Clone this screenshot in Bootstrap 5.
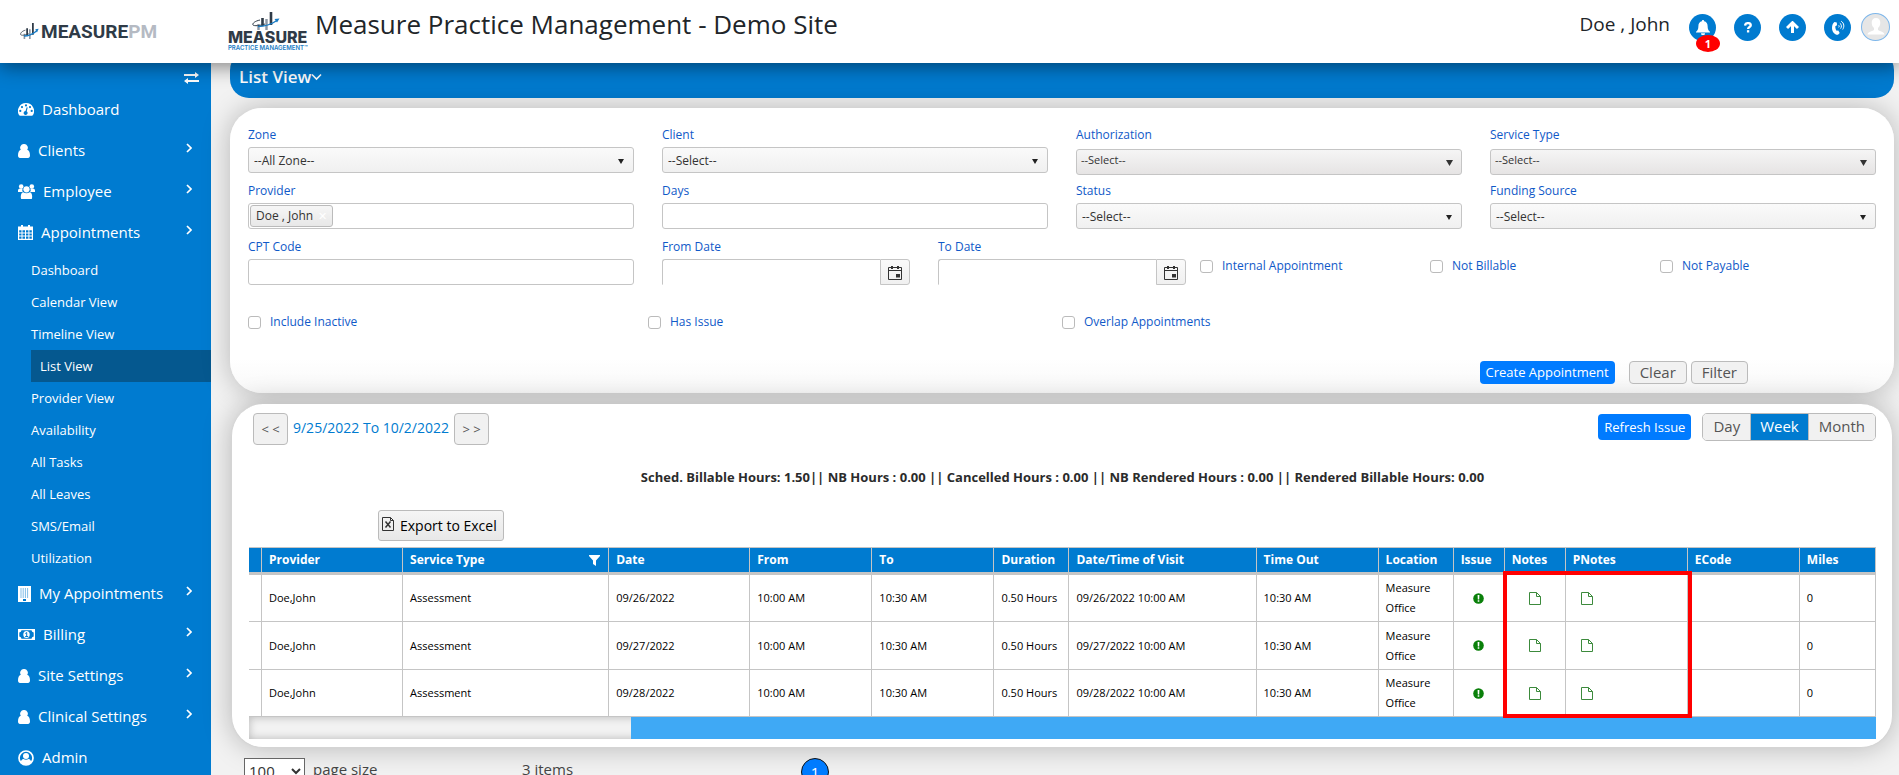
<!DOCTYPE html>
<html lang="en">
<head>
<meta charset="utf-8">
<meta name="viewport" content="width=device-width, initial-scale=1">
<title>Measure Practice Management - List View</title>
<link href="https://cdn.jsdelivr.net/npm/bootstrap@5.3.0/dist/css/bootstrap.min.css" rel="stylesheet">
<style>
:root { --brand: #007bd0; --line: #c5c5c5; --label: #1059c8; }
body { font-family: "Open Sans", "Noto Sans", sans-serif; font-size: 15px; background: #f2f2f2; height: 100vh; overflow: hidden; color: #212529; }
svg { display: block; }
a { text-decoration: none; }

/* top bar */
.topbar { height: 63px; background: #fff; z-index: 20; box-shadow: 0 4px 18px rgba(0,0,0,.45); padding-right: 9px; }
.brand-side { width: 228px; padding: 0 0 0 20px; color: #2f3b47; }
.brand-word { font: 700 19px/20px Roboto, sans-serif; margin-left: 2px; }
.brand-word i { font-style: normal; color: #b5bac3; }
.brand-main { width: 87px; }
.brand-main b { font: 800 16px/13px Inter, sans-serif; color: #2f3b47; }
.brand-main small { font: 600 6px/8px Inter, sans-serif; color: #1a7cc4; white-space: nowrap; }
.site-name { font-size: 26px; line-height: 30px; margin-top: -15px; }
.user-name { font-size: 19px; line-height: 24px; margin: -15px 19px 0 0; }
.round { width: 27px; height: 27px; border-radius: 50%; background: var(--brand); color: #fff; }
.top-icons { gap: 18px; margin-top: -9px; }
.count { top: 21px; left: 7px; width: 24px; height: 17px; border-radius: 50%; background: red; font: 700 11px/17px "Open Sans", sans-serif; }
.avatar { width: 29px; height: 28px; border-radius: 50%; background: #e6e6e6; border: 1px solid #7db6ea; margin-left: -8px; color: #fff; }

/* side menu */
.side { width: 211px; background: var(--brand); padding-top: 27px; }
.side a { color: #fff; }
.toggle { height: 0; padding-right: 12px; }
.toggle button { height: 12px; margin-top: -18px; color: #fff; }
.menu-top { height: 41px; padding: 0 18px 2px; }
.menu-top span { margin-left: 8px; }
.menu-top .arrow { margin: 0 1px 6px auto; }
.menu-sub { height: 32px; margin-left: 31px; padding-top: 1px; font-size: 13px; }
.menu-sub.active { background: #05588f; padding-left: 9px; }

/* panels */
.content-area { padding: 0 5px 0 19px; }
.page-bar { height: 47px; margin-top: -12px; border-radius: 19px; background: var(--brand); color: #fff; font-size: 17px; font-weight: 600; padding: 4px 9px 0; }
.panel { background: #fff; border-radius: 32px; box-shadow: 0 0 28px rgba(0,0,0,.25); }
.panel-filter { margin-top: 10px; height: 285px; padding: 16px 18px 0; background: linear-gradient(#fff 88%, #f8f8f8); }
.panel-list { margin: 11px 1px 0; height: 344px; padding: 9px 16px 0 17px; border: 1px solid #d4d4d4; border-top: 0; }

.fields { display: grid; grid-template-columns: repeat(4, minmax(0, 1fr)); column-gap: 28px; }
.field { height: 56px; }
.field label, .tick label { color: var(--label); font-size: 12px; line-height: 20px; font-weight: 500; }
.field > label { display: block; padding-top: 1px; height: 23px; }
.box { height: 26px; border: 1px solid var(--line); border-radius: 3px; font-size: 12px; padding: 1px 5px 0; color: #333; background: #fff; width: 100%; }
select.box { appearance: none; background: url("data:image/svg+xml,%3Csvg xmlns='http://www.w3.org/2000/svg' width='6' height='5'%3E%3Cpath d='M0 0h6L3 5z' fill='%23222'/%3E%3C/svg%3E") no-repeat right 9px top 11px, linear-gradient(#fafafa, #f0f0f0); }
select.box.darker { font-size: 11px; padding: 0 4px 3px; background: url("data:image/svg+xml,%3Csvg xmlns='http://www.w3.org/2000/svg' width='7' height='6'%3E%3Cpath d='M0 0h7L3.500 6z' fill='%23333'/%3E%3C/svg%3E") no-repeat right 8px top 10px, linear-gradient(#f5f5f5, #e6e4e4); }
.box.tags { padding: 1px; }
.tag { height: 22px; border: 1px solid #bbb; border-radius: 3px; background: linear-gradient(#f6f6f6, #e8e8e8); padding: 0 5px; font-size: 12px; gap: 5px; color: #333; }
.tag button { color: #fff; font-size: 11px; line-height: 12px; }
.tags input { outline: 0; min-width: 0; }
.date-row { display: grid; grid-template-columns: 386fr 1214fr; column-gap: 28px; }
.date-parts { display: grid; grid-template-columns: 276fr 262fr 230fr 230fr 216fr; }
.date-parts .from-part { padding-right: 28px; }
.date-parts .to-part { padding-right: 14px; }
.date-parts .tick { margin-top: 23px; }
.date-in { border-right: 0; border-bottom-color: #fff; border-radius: 3px 0 0 0; }
.date-btn { width: 30px; border: 1px solid var(--line); border-radius: 0 3px 3px 0; background: linear-gradient(#fafafa, #f0f0f0); color: #333; }
.tick { height: 14px; gap: 9px; }
.tick input { appearance: none; width: 13px; height: 13px; margin: 0; border: 1px solid #bbb; border-radius: 3px; background: #fff; }
.tick-row { display: grid; grid-template-columns: 400fr 414fr 814fr; margin-top: 23px; }
.actions { padding-right: 128px; margin-top: 32px; }
.gbtn { border: 1px solid #bbb; border-radius: 4px; background: #f1f1f1; color: #555; font-size: 15px; line-height: 21px; padding: 0 10px; }
.bbtn { border: 0; border-radius: 4px; background: #007bff; color: #fff; font-size: 13px; line-height: 23px; padding: 0 6px; }
.actions .bbtn { margin-right: 14px; }

/* list */
.step { height: 32px; width: 35px; padding: 0; font-size: 13px; }
.range { color: var(--brand); font-size: 14px; line-height: 30px; font-weight: 500; width: 166px; text-align: center; }
.refresh { line-height: 26px; margin: 1px 11px 0 auto; }
.spans { height: 28px; border: 1px solid #bbb; border-radius: 5px; overflow: hidden; }
.spans button { border: 0; border-left: 1px solid #bbb; background: #f1f1f1; color: #555; font-size: 15px; line-height: 24px; padding: 0 10px 2px; }
.spans button:first-child { border-left: 0; }
.spans button.on { background: var(--brand); color: #fff; padding: 0 9px 2px; }
.totals { font-size: 13px; font-weight: 700; line-height: 20px; margin-top: 22px; color: #2b2b2b; }
.export { margin: 23px 0 6px 129px; height: 31px; border: 1px solid #bbb; border-radius: 3px; background: linear-gradient(#f5f5f5, #e8e8e8); color: #000; font-size: 14px; padding: 0 6px 0 3px; gap: 6px; }
.grid { table-layout: fixed; width: 100%; border-collapse: separate; border-spacing: 0; font-size: 11px; color: #000; }
.grid th { background: var(--brand); color: #fff; font-weight: 700; font-size: 12px; height: 28px; padding: 0 0 0 7px; border: 1px solid var(--line); border-width: 1px 1px 3px 0; white-space: nowrap; }
.grid td { height: 47px; padding: 0 0 0 7px; border: 1px solid var(--line); border-width: 0 1px 1px 0; line-height: 20px; white-space: nowrap; }
.grid td.wrap { white-space: normal; padding-right: 20px; }
.grid td.mid { padding: 0; }
.grid tbody tr:nth-child(2) td { height: 48px; }
.grid th:first-child, .grid td:first-child { padding: 0; }
.marker { top: 24px; bottom: -1px; left: 77.1%; width: 11.6%; border: 4px solid red; pointer-events: none; }
.hscroll { height: 22px; background: #f2f2f2; box-shadow: inset 0 0 8px rgba(0,0,0,.25); }
.hscroll div { height: 22px; width: 76.500%; background: #3fa9f5; }
.pager { display: grid; grid-template-columns: 61px 217px 279px auto; height: 40px; padding: 10px 0 0 14px; font-size: 15px; line-height: 22px; color: #444; }
.pager select { height: 26px; border: 1px solid #666; background: #fff; font-size: 15px; padding: 0; color: #333; }
.page-no { width: 28px; height: 28px; border-radius: 50%; border: 1px solid #111; background: #007bff; color: #fff; font-size: 15px; padding: 0; }
</style>
</head>
<body>
<svg width="0" height="0" class="position-absolute" aria-hidden="true">
  <symbol id="i-user" viewBox="0 0 12 14"><path fill="currentColor" d="M6 0a3.700 3.700 0 0 1 3.200 5.800C11.200 6.500 12 8.500 12 11.500c0 1.500-.8 2.500-2 2.500H2c-1.200 0-2-1-2-2.500 0-3 .8-5 2.800-5.700A3.700 3.700 0 0 1 6 0z"/></symbol>
  <symbol id="i-dash" viewBox="0 0 16 13"><path fill="currentColor" fill-rule="evenodd" d="M8 0a8 8 0 0 1 6.800 12.300c-.2.300-.5.500-.8.500H2c-.3 0-.6-.2-.8-.5A8 8 0 0 1 8 0zM8 1.300a1.100 1.100 0 1 0 0 2.200 1.100 1.100 0 0 0 0-2.200zM4 3a1.100 1.100 0 1 0 0 2.200A1.100 1.100 0 0 0 4 3zm8 0a1.100 1.100 0 1 0 0 2.200A1.100 1.100 0 0 0 12 3zM2.300 6.800a1.100 1.100 0 1 0 0 2.200 1.100 1.100 0 0 0 0-2.200zm11.400 0a1.100 1.100 0 1 0 0 2.200 1.100 1.100 0 0 0 0-2.200zM8.700 4.300 7.500 8a2 2 0 1 0 1.200.3L9.700 4.600z"/></symbol>
  <symbol id="i-users" viewBox="0 0 17 15"><g fill="currentColor"><circle cx="3.200" cy="2.600" r="2.300"/><circle cx="13.800" cy="2.600" r="2.300"/><path d="M0 8V6.500C0 5 1 4.500 2.200 4.700c1 .5 1.800.4 2.400.2C4 6.200 4.300 7.300 5 8zM17 8V6.500c0-1.500-1-2-2.200-1.800-1 .5-1.800.4-2.400.2.600 1.300.3 2.400-.4 3.100z"/><circle cx="8.500" cy="5.300" r="3.100"/><path d="M3.300 15C2.500 14 2.400 8.500 5.300 8.200c2 1.500 4.400 1.500 6.400 0 2.900.3 2.800 5.800 2 6.800z"/></g></symbol>
  <symbol id="i-cal" viewBox="0 0 15 15"><path fill="currentColor" fill-rule="evenodd" d="M3 0h2v1.500h5V0h2v1.500h3V15H0V1.500h3zM1.200 5.200v2.200h2.300V5.200zm3.300 0v2.200H7V5.200zm3.500 0v2.200h2.400V5.200zm3.400 0v2.200h2.400V5.200zM1.200 8.400v2.200h2.300V8.400zm3.300 0v2.200H7V8.400zm3.500 0v2.200h2.400V8.400zm3.400 0v2.200h2.400V8.400zM1.200 11.600v2.200h2.300v-2.200zm3.300 0v2.200H7v-2.200zm3.500 0v2.200h2.400v-2.200zm3.400 0v2.200h2.400v-2.200z"/></symbol>
  <symbol id="i-bld" viewBox="0 0 13 16"><path fill="currentColor" d="M0 0h13v16H0z"/><path stroke="#007bd0" stroke-dasharray="1 1.200" d="M2.500 3h8M2.500 5h8M2.500 7h8M2.500 9h8M2.500 11h8"/><path fill="#007bd0" d="M5 13h3v2H5z"/></symbol>
  <symbol id="i-bill" viewBox="0 0 17 11"><path fill="currentColor" fill-rule="evenodd" d="M0 0h17v11H0zM3.500 1.300A2.500 2.500 0 0 1 1.300 3.500v4a2.500 2.500 0 0 1 2.200 2.200h10a2.500 2.500 0 0 1 2.200-2.200v-4a2.500 2.500 0 0 1-2.200-2.200z"/><ellipse cx="8.500" cy="5.500" rx="3.200" ry="3.600" fill="currentColor"/><path stroke="#007bd0" fill="none" d="M7.300 4.500 8.700 3.500V7.500M7.200 7.500h3"/></symbol>
  <symbol id="i-admin" viewBox="0 0 16 16"><circle cx="8" cy="8" r="7" fill="none" stroke="currentColor" stroke-width="1.700"/><circle cx="8" cy="6" r="3" fill="currentColor"/><path fill="currentColor" d="M2.500 12C3.500 9.500 5 9 5.500 9c1.500 1 3.500 1 5 0 .5 0 2 .5 3 3A7 7 0 0 1 2.500 12z"/></symbol>
  <symbol id="i-arrow" viewBox="0 0 6 10"><path fill="none" stroke="currentColor" stroke-width="1.700" d="m1 1 4 4-4 4"/></symbol>
  <symbol id="i-graph" viewBox="0 0 28 19"><g fill="none"><path stroke="#2f3b47" stroke-width="2.600" d="M10.500 6v8M19 0v13"/><path stroke="#8d97a3" stroke-width="2.400" d="M6.500 12v6M14.500 7v11"/><path stroke="#2f3b47" d="M8 8C3 9 0 11.500 1 13c1 1.200 7 .8 12-1"/><path stroke="#1a7cc4" stroke-width="1.500" d="M6 14.500c8 0 13-2 19-6"/><path fill="#1a7cc4" d="m22.500 7 5-.5-2.500 4z"/></g></symbol>
  <symbol id="i-file" viewBox="0 0 12 13"><path fill="none" stroke="#3c8a3c" d="M.5.500h7l4 4v8H.5zM7.500.5v4h4"/></symbol>
  <symbol id="i-issue" viewBox="0 0 11 11"><circle cx="5.500" cy="5.500" r="5.300" fill="#0a800a"/><path fill="#fff" d="M4.600 2h1.800l-.2 4.500H4.800zM4.700 7.300h1.600v1.500H4.700z"/></symbol>
  <symbol id="i-date" viewBox="0 0 14 15"><path fill="none" stroke="currentColor" d="M.5 2.500h13v12H.5zM.5 5.500h13"/><path fill="currentColor" d="M3 1h2v3H3zM9 1h2v3H9zM8 9h4v3.500H8z"/></symbol>
</svg>

<header class="topbar position-relative d-flex align-items-center">
  <a href="#" class="brand-side d-flex align-items-center" aria-label="Measure PM">
    <svg width="19" height="17" viewBox="0 0 28 19" preserveAspectRatio="none"><use href="#i-graph"/></svg>
    <span class="brand-word">MEASURE<i>PM</i></span>
  </a>
  <a href="#" class="brand-main d-flex flex-column">
    <svg width="28" height="19" class="ms-4"><use href="#i-graph"/></svg>
    <b>MEASURE</b><small>PRACTICE MANAGEMENT™</small>
  </a>
  <h1 class="site-name mb-0 fw-normal">Measure Practice Management - Demo Site</h1>
  <span class="user-name ms-auto">Doe , John</span>
  <div class="top-icons d-flex align-items-center">
    <button class="btn p-0 border-0 round position-relative d-flex align-items-center justify-content-center" aria-label="Notifications">
      <svg width="14" height="15" viewBox="0 0 14 15"><path fill="currentColor" d="M7 0c.7 0 1.100.4 1.100 1.200C10.500 1.700 11.600 3.500 11.600 6c0 3.500 1 4.600 2.400 5.800V12.500H0v-.7C1.400 10.600 2.400 9.500 2.400 6c0-2.500 1.100-4.300 3.500-4.800C5.900.4 6.300 0 7 0zM5 13.200h4a2 2 0 0 1-4 0z"/></svg>
      <span class="count position-absolute">1</span>
    </button>
    <button class="btn p-0 border-0 round d-flex align-items-center justify-content-center" aria-label="Help">
      <svg width="8" height="11" viewBox="0 0 9 12"><path fill="none" stroke="currentColor" stroke-width="2.600" d="M1.200 3.800C1.500 0 7.600.4 7.600 3.500 7.600 5.500 4.600 5.400 4.600 7.800"/><path fill="currentColor" d="M3.300 9h2.600v2.600H3.300z"/></svg>
    </button>
    <button class="btn p-0 border-0 round d-flex align-items-center justify-content-center" aria-label="Upload">
      <svg width="13" height="12" viewBox="0 0 13 12"><path fill="none" stroke="currentColor" stroke-width="3" d="m1 7 5.500-5.300L12 7M6.500 2v10"/></svg>
    </button>
    <button class="btn p-0 border-0 round d-flex align-items-center justify-content-center" aria-label="Call">
      <svg width="14" height="15" viewBox="0 0 14 15"><path fill="currentColor" d="M3.500 2 5.800 2.500 6 5.300 4.300 6.200c0 2 .3 3.200 1.300 4.500l1.700-.2 1.400 2.500-1.700 1.800C3.500 15 1 11.500 1 8c0-3 1-5 2.500-6z"/><path fill="none" stroke="currentColor" d="M7.500 5.200c.8.500.8 1.500.2 2.200M8.800 3.200c2 1.200 2 3.800.8 5.400M10.200 1.200c3 2 3.300 5.500 1.500 8.300"/></svg>
    </button>
    <button class="btn p-0 avatar overflow-hidden d-flex align-items-end justify-content-center" aria-label="Profile">
      <svg width="20" height="22" viewBox="0 0 20 22"><path fill="currentColor" d="M10 0c3 0 4.500 2 4.300 5-.1 2-1 4-2.300 5v2c2 1.500 6 1.500 6.500 4.500H1.500C2 13.500 6 13.500 8 12v-2C6.700 9 5.800 7 5.700 5 5.500 2 7 0 10 0z"/></svg>
    </button>
  </div>
</header>

<div class="d-flex align-items-start">
  <nav class="side flex-shrink-0 min-vh-100">
    <div class="toggle d-flex justify-content-end"><button class="btn p-0 border-0" aria-label="Toggle menu"><svg width="15" height="12" viewBox="0 0 15 12"><path fill="none" stroke="currentColor" stroke-width="2" d="M0 3h12M3 9h12"/><path fill="currentColor" d="m11 0 4 3-4 3zM4 6 0 9l4 3z"/></svg></button></div>
    <a href="#" class="menu-top d-flex align-items-center"><svg width="16" height="13"><use href="#i-dash"/></svg><span>Dashboard</span></a>
    <a href="#" class="menu-top d-flex align-items-center"><svg width="12" height="14"><use href="#i-user"/></svg><span>Clients</span><svg class="arrow" width="6" height="10"><use href="#i-arrow"/></svg></a>
    <a href="#" class="menu-top d-flex align-items-center"><svg width="17" height="15"><use href="#i-users"/></svg><span>Employee</span><svg class="arrow" width="6" height="10"><use href="#i-arrow"/></svg></a>
    <a href="#" class="menu-top d-flex align-items-center"><svg width="15" height="15"><use href="#i-cal"/></svg><span>Appointments</span><svg class="arrow" width="6" height="10"><use href="#i-arrow"/></svg></a>
    <a href="#" class="menu-sub d-flex align-items-center">Dashboard</a>
    <a href="#" class="menu-sub d-flex align-items-center">Calendar View</a>
    <a href="#" class="menu-sub d-flex align-items-center">Timeline View</a>
    <a href="#" class="menu-sub active d-flex align-items-center">List View</a>
    <a href="#" class="menu-sub d-flex align-items-center">Provider View</a>
    <a href="#" class="menu-sub d-flex align-items-center">Availability</a>
    <a href="#" class="menu-sub d-flex align-items-center">All Tasks</a>
    <a href="#" class="menu-sub d-flex align-items-center">All Leaves</a>
    <a href="#" class="menu-sub d-flex align-items-center">SMS/Email</a>
    <a href="#" class="menu-sub d-flex align-items-center">Utilization</a>
    <a href="#" class="menu-top d-flex align-items-center"><svg width="13" height="16"><use href="#i-bld"/></svg><span>My Appointments</span><svg class="arrow" width="6" height="10"><use href="#i-arrow"/></svg></a>
    <a href="#" class="menu-top d-flex align-items-center"><svg width="17" height="11"><use href="#i-bill"/></svg><span>Billing</span><svg class="arrow" width="6" height="10"><use href="#i-arrow"/></svg></a>
    <a href="#" class="menu-top d-flex align-items-center"><svg width="12" height="14"><use href="#i-user"/></svg><span>Site Settings</span><svg class="arrow" width="6" height="10"><use href="#i-arrow"/></svg></a>
    <a href="#" class="menu-top d-flex align-items-center"><svg width="12" height="14"><use href="#i-user"/></svg><span>Clinical Settings</span><svg class="arrow" width="6" height="10"><use href="#i-arrow"/></svg></a>
    <a href="#" class="menu-top d-flex align-items-center"><svg width="16" height="16"><use href="#i-admin"/></svg><span>Admin</span></a>
  </nav>

  <main class="content-area flex-grow-1">
    <div class="page-bar d-flex align-items-center">List View<svg width="11" height="8" viewBox="0 0 11 8"><path fill="none" stroke="currentColor" stroke-width="1.600" d="m1 1.500 4.500 4.500L10 1.500"/></svg></div>

    <form class="panel panel-filter">
      <div class="fields">
        <div class="field"><label for="zone">Zone</label><select id="zone" class="box"><option>--All Zone--</option></select></div>
        <div class="field"><label for="client">Client</label><select id="client" class="box"><option>--Select--</option></select></div>
        <div class="field"><label for="auth">Authorization</label><select id="auth" class="box darker"><option>--Select--</option></select></div>
        <div class="field"><label for="stype">Service Type</label><select id="stype" class="box darker"><option>--Select--</option></select></div>
        <div class="field"><label for="prov">Provider</label><div class="box tags d-flex"><span class="tag d-flex align-items-center">Doe , John <button type="button" class="btn p-0 border-0" aria-label="Remove">✕</button></span><input id="prov" type="text" class="border-0 flex-grow-1 bg-transparent"></div></div>
        <div class="field"><label for="days">Days</label><input id="days" type="text" class="box"></div>
        <div class="field"><label for="status">Status</label><select id="status" class="box"><option>--Select--</option></select></div>
        <div class="field"><label for="fund">Funding Source</label><select id="fund" class="box"><option>--Select--</option></select></div>
      </div>
      <div class="date-row">
        <div class="field"><label for="cpt">CPT Code</label><input id="cpt" type="text" class="box"></div>
        <div class="date-parts">
          <div class="field from-part"><label for="from">From Date</label><div class="d-flex"><input id="from" type="text" class="box date-in"><button type="button" class="date-btn d-flex align-items-center justify-content-center flex-shrink-0" aria-label="Pick from date"><svg width="14" height="15"><use href="#i-date"/></svg></button></div></div>
          <div class="field to-part"><label for="to">To Date</label><div class="d-flex"><input id="to" type="text" class="box date-in"><button type="button" class="date-btn d-flex align-items-center justify-content-center flex-shrink-0" aria-label="Pick to date"><svg width="14" height="15"><use href="#i-date"/></svg></button></div></div>
          <div class="tick d-flex align-items-center"><input type="checkbox" id="c1"><label for="c1">Internal Appointment</label></div>
          <div class="tick d-flex align-items-center"><input type="checkbox" id="c2"><label for="c2">Not Billable</label></div>
          <div class="tick d-flex align-items-center"><input type="checkbox" id="c3"><label for="c3">Not Payable</label></div>
        </div>
      </div>
      <div class="tick-row">
        <div class="tick d-flex align-items-center"><input type="checkbox" id="c4"><label for="c4">Include Inactive</label></div>
        <div class="tick d-flex align-items-center"><input type="checkbox" id="c5"><label for="c5">Has Issue</label></div>
        <div class="tick d-flex align-items-center"><input type="checkbox" id="c6"><label for="c6">Overlap Appointments</label></div>
      </div>
      <div class="actions d-flex justify-content-end">
        <button type="button" class="bbtn">Create Appointment</button>
        <button type="button" class="gbtn me-1">Clear</button>
        <button type="button" class="gbtn">Filter</button>
      </div>
    </form>

    <section class="panel panel-list">
      <div class="d-flex align-items-start">
        <button class="gbtn step ms-1">&lt; &lt;</button>
        <span class="range">9/25/2022 To 10/2/2022</span>
        <button class="gbtn step">&gt; &gt;</button>
        <button class="bbtn refresh">Refresh Issue</button>
        <div class="spans d-flex"><button>Day</button><button class="on">Week</button><button>Month</button></div>
      </div>
      <p class="totals text-center mb-0">Sched. Billable Hours: 1.50|| NB Hours : 0.00 || Cancelled Hours : 0.00 || NB Rendered Hours : 0.00 || Rendered Billable Hours: 0.00</p>
      <button class="export d-flex align-items-center"><svg width="12" height="14" viewBox="0 0 12 14" class="mb-1"><path fill="none" stroke="#333" d="M.5.5h8l3 3v10H.5zM8.500.5v3h3"/><path fill="none" stroke="#333" stroke-width="1.500" d="m3.500 4.500 5 6M8.500 4.500l-5 6"/></svg>Export to Excel</button>
      <div class="position-relative">
        <table class="grid">
          <colgroup><col style="width:13px"><col style="width:141px"><col style="width:206px"><col style="width:141px"><col style="width:122px"><col style="width:122px"><col style="width:75px"><col style="width:187px"><col style="width:122px"><col style="width:75px"><col style="width:51px"><col style="width:61px"><col style="width:122px"><col style="width:112px"><col style="width:76px"></colgroup>
          <thead><tr><th></th><th>Provider</th><th><span class="d-flex justify-content-between align-items-center">Service Type<svg width="11" height="11" viewBox="0 0 11 11" class="me-2 pe-none"><path fill="currentColor" d="M0 0h11v1L7 5.500V11L4 9V5.500L0 1z"/></svg></span></th><th>Date</th><th>From</th><th>To</th><th>Duration</th><th>Date/Time of Visit</th><th>Time Out</th><th>Location</th><th>Issue</th><th>Notes</th><th>PNotes</th><th>ECode</th><th>Miles</th></tr></thead>
          <tbody>
            <tr><td></td><td>Doe,John</td><td>Assessment</td><td>09/26/2022</td><td>10:00 AM</td><td>10:30 AM</td><td>0.50 Hours</td><td>09/26/2022 10:00 AM</td><td>10:30 AM</td><td class="wrap">Measure Office</td><td class="mid"><svg class="mx-auto" width="11" height="11"><use href="#i-issue"/></svg></td><td class="mid"><svg class="mx-auto" width="12" height="13"><use href="#i-file"/></svg></td><td><svg class="ms-2" width="12" height="13"><use href="#i-file"/></svg></td><td></td><td>0</td></tr>
            <tr><td></td><td>Doe,John</td><td>Assessment</td><td>09/27/2022</td><td>10:00 AM</td><td>10:30 AM</td><td>0.50 Hours</td><td>09/27/2022 10:00 AM</td><td>10:30 AM</td><td class="wrap">Measure Office</td><td class="mid"><svg class="mx-auto" width="11" height="11"><use href="#i-issue"/></svg></td><td class="mid"><svg class="mx-auto" width="12" height="13"><use href="#i-file"/></svg></td><td><svg class="ms-2" width="12" height="13"><use href="#i-file"/></svg></td><td></td><td>0</td></tr>
            <tr><td></td><td>Doe,John</td><td>Assessment</td><td>09/28/2022</td><td>10:00 AM</td><td>10:30 AM</td><td>0.50 Hours</td><td>09/28/2022 10:00 AM</td><td>10:30 AM</td><td class="wrap">Measure Office</td><td class="mid"><svg class="mx-auto" width="11" height="11"><use href="#i-issue"/></svg></td><td class="mid"><svg class="mx-auto" width="12" height="13"><use href="#i-file"/></svg></td><td><svg class="ms-2" width="12" height="13"><use href="#i-file"/></svg></td><td></td><td>0</td></tr>
          </tbody>
        </table>
        <div class="marker position-absolute"></div>
      </div>
      <div class="hscroll d-flex justify-content-end"><div></div></div>
    </section>

    <div class="pager">
      <select aria-label="Page size"><option>100</option></select><span class="ms-2">page size</span>
      <span>3 items</span>
      <button class="page-no">1</button>
    </div>
  </main>
</div>
<script src="https://cdn.jsdelivr.net/npm/bootstrap@5.3.0/dist/js/bootstrap.bundle.min.js"></script>
</body>
</html>
